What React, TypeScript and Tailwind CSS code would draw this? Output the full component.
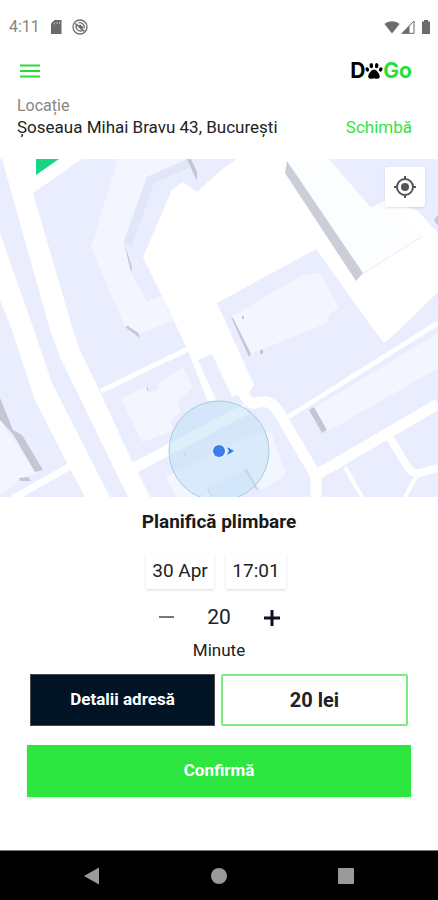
import React, { useState } from 'react';

const StatusBar = () => (
  <div className="flex h-[53px] items-center justify-between pl-[9px] pr-1 text-[#6b6b6b]">
    <div className="flex items-center">
      <span className="text-base text-[#858585]">4:11</span>
      <svg className="ml-2 h-4 w-4" viewBox="0 0 16 16" fill="currentColor">
        <path d="M6.500 1h7v14H3V4.500z" />
        <path d="M6.500 3.500v2M9 3v2M11.500 3v2" stroke="#b8b8b8" strokeWidth="1" />
      </svg>
      <svg className="ml-2 h-4 w-4" viewBox="0 0 16 16" fill="none" stroke="currentColor" strokeWidth="1.300">
        <circle cx="8" cy="8" r="7" />
        <path d="M4.500 5.500a4.500 4.500 0 0 0 6 6M6.500 4a4.300 4.300 0 0 1 5.500 5.500" />
        <path d="M3.500 4.500l9 8" strokeWidth="1.600" />
        <path d="M7 6.500l3.500 3" strokeWidth="3" />
      </svg>
    </div>
    <div className="flex items-center">
      <svg className="h-4 w-4" viewBox="0 0 16 16" fill="currentColor">
        <path d="M8 14.500L.500 5C4.500 1.200 11.500 1.200 15.500 5z" />
      </svg>
      <svg className="h-4 w-4" viewBox="0 0 16 16">
        <path d="M14 2v12.300H2z" fill="none" stroke="currentColor" strokeWidth="1" />
        <path d="M9.500 7v7.500H2z" fill="currentColor" />
      </svg>
      <svg className="ml-[2px] h-4 w-4" viewBox="0 0 16 16" fill="currentColor">
        <path d="M6 1h4v1.500h2V15H4V2.500h2z" />
      </svg>
    </div>
  </div>
);

const Logo = () => (
  <div className="flex items-center font-[Inter,sans-serif] text-[21px] font-bold leading-6">
    <span className="text-black">D</span>
    <svg className="h-5 w-[18px]" viewBox="0 0 18 20" fill="#000">
      <ellipse cx="2.300" cy="8.500" rx="1.700" ry="2.200" transform="rotate(-25 2.300 8.500)" />
      <ellipse cx="6.300" cy="4.700" rx="1.800" ry="2.600" transform="rotate(-8 6.300 4.700)" />
      <ellipse cx="11.700" cy="4.700" rx="1.800" ry="2.600" transform="rotate(8 11.700 4.700)" />
      <ellipse cx="15.700" cy="8.500" rx="1.700" ry="2.200" transform="rotate(25 15.700 8.500)" />
      <path d="M9 8.500c2.600 0 5.800 4.700 5.800 7.100 0 2.800-3.200 2.400-5.800 1.600-2.600.8-5.800 1.200-5.800-1.600C3.200 13.200 6.400 8.500 9 8.500z" />
    </svg>
    <span className="text-[#22e03a]">Go</span>
  </div>
);

const CityMap = () => (
  <svg className="block h-full w-full" viewBox="0 0 438 338" preserveAspectRatio="xMidYMid slice">
    <rect width="438" height="338" fill="#e9edfd" />

    {/* Buildings */}
    <g fill="#f3f6ff">
      <path d="M118 0H187L147 18L124 82L131 113L147 143L161 137L173 162L141 174L125 168L91 88z" />
      <path d="M231 158L301 117L320 114L339 149L329 155L327 164L251 195z" />
      <path d="M438 174V209L327 273L312 250z" />
      <path d="M121 239L145 228L149 233L158 231V224L183 208L193 229L177 243L181 253L171 261L172 272L142 283z" />
      <path d="M0 261L36 314L20 320L0 337z" />
      <path d="M166 318L245 278L271 272L286 316L262 331L246 309L208 329L213 338H176z" />
    </g>
    <path d="M147 18L187 0L190 8L154 24L131 88L124 82z" fill="#e1e6f8" />

    {/* Main roads */}
    <g fill="#fff">
      <path d="M0 74L34 171L52 224L110 338H85L68 306L35 241L12 171L0 141z" />
      <path d="M2 0H82L33 34L73 171L80 191L100 233L133 304L150 338H128L60 198L50 171z" />
      <path d="M236 0H329L371 49L386 41L417 51L438 74V133L399 171L384 184L374 171L316 90L217 144L254 226L250 232L232 238L212 195L198 201L216 241L208 243L187 189L143 98L172 31L183 23L197 33L219 13z" />
    </g>

    {/* Side streets */}
    <g fill="none" stroke="#fff">
      <path d="M101 232L188 190" strokeWidth="5" />
      <path d="M134 309L246 250" strokeWidth="11" />
      <path d="M240 228C246 240 249 246 256 244C270 240 275 246 281 257L316 317V338" strokeWidth="11" />
      <path d="M438 245L313 318" strokeWidth="11" />
      <path d="M438 164L288 258" strokeWidth="5" />
      <path d="M389 277L407 307Q412 316 420 314L438 309" strokeWidth="8" />
      <path d="M416 318L405 338M345 308L362 338" strokeWidth="4" />
      <path d="M12 340L74 305" strokeWidth="7" />
    </g>

    {/* Tall block and its wall */}
    <path d="M287 3L329 0L371 49L386 41L423 75L362 114z" fill="#fcfdff" />
    <path d="M423 77L362 115" stroke="#e8eaf2" />
    <path d="M287 2L285 14L356 122L363 114z" fill="#cbced6" />
    <g fill="#c4c7d3">
      <path d="M187 0L197 22V13L191 0z" />
      <path d="M124 84L131 113L132 108L125 87z" />
      <path d="M125 168L140 179L138 174L128 167z" />
      <path d="M231 158L249 198L251 195L233 159z" />
      <path d="M309 251L314 248L327 271L322 274z" />
      <path d="M0 239L13 271L22 276L43 311L35 313L13 275L0 261z" />
      <path d="M438 56L434 61L438 67zM19 319L28 318L31 322L20 322zM260 191h3v4h-3zM242 157h2v3h-2zM147 228h1v4h-1zM183 294L187 299L185 293z" />
      <path d="M208 329L213 338H212L207 330zM246 309L258 331L256 330L245 311z" />
    </g>
    <path d="M36 0H59L36 16z" fill="#16d585" />

    {/* Current position */}
    <circle cx="219" cy="292" r="50" fill="#bfe0f6" fillOpacity="0.5" stroke="#a9cbe2" />
    <circle cx="219" cy="292" r="7" fill="#fff" fillOpacity="0.5" />
    <circle cx="219" cy="292" r="6" fill="#3a7dec" />
    <path d="M227 288L234 292L227 296L229 292z" fill="#2f78ea" />
  </svg>
);

const App = () => {
  const [minutes, setMinutes] = useState(20);

  return (
    <div className="flex min-h-screen flex-col bg-white font-[Roboto,sans-serif] text-[#222]">
      <StatusBar />

      <header className="px-[17px]">
        <div className="flex h-9 items-center justify-between pl-[3px] pr-[9px]">
          <button aria-label="Meniu" className="text-[#2bdc38]">
            <svg className="h-5 w-5" viewBox="0 0 20 20" stroke="currentColor" strokeWidth="2">
              <path d="M0 4.500h20M0 10h20M0 15.500h20" />
            </svg>
          </button>
          <Logo />
        </div>
        <p className="mt-[7px] text-base leading-5 text-[#858585]">Locație</p>
        <div className="flex h-6 items-center justify-between pr-[9px] text-[17px]">
          <p>Șoseaua Mihai Bravu 43, București</p>
          <button className="text-[#35e142]">Schimbă</button>
        </div>
      </header>

      <section className="relative mt-[19px] h-[338px] overflow-hidden">
        <CityMap />
        <button
          aria-label="Locația mea"
          className="absolute right-[13px] top-2 flex h-10 w-10 items-center justify-center rounded-xs bg-white text-[#555] shadow"
        >
          <svg className="h-6 w-6" viewBox="0 0 24 24" fill="none" stroke="currentColor" strokeWidth="2">
            <circle cx="12" cy="12" r="8" />
            <circle cx="12" cy="12" r="4" fill="currentColor" stroke="none" />
            <path d="M12 1v3M12 20v3M1 12h3M20 12h3" />
          </svg>
        </button>
      </section>

      <main className="flex flex-col px-[27px]">
        <h1 className="mt-[13px] text-center text-[19px] font-bold leading-6 text-[#1a1a1a]">Planifică plimbare</h1>

        <div className="mt-[19px] flex justify-center gap-3 pr-[6px] text-[19px]">
          <button className="h-9 w-[68px] whitespace-nowrap bg-white shadow-sm">30 Apr</button>
          <button className="h-9 w-[60px] whitespace-nowrap bg-white shadow-sm">17:01</button>
        </div>

        <div className="mt-[14px] flex items-center justify-center gap-6">
          <button aria-label="Mai puțin" onClick={() => setMinutes(minutes - 5)} className="p-1">
            <svg className="h-5 w-5" viewBox="0 0 20 20" stroke="#777" strokeWidth="2">
              <path d="M2 10h15" />
            </svg>
          </button>
          <span className="w-7 text-center text-[21px] leading-7">{minutes}</span>
          <button aria-label="Mai mult" onClick={() => setMinutes(minutes + 5)} className="p-1">
            <svg className="h-5 w-5" viewBox="0 0 20 20" stroke="#0d0d1c" strokeWidth="3">
              <path d="M3 11h16M11 3v16" />
            </svg>
          </button>
        </div>
        <p className="mt-[7px] text-center text-[17px] leading-6">Minute</p>

        <div className="mt-3 flex gap-[6px] px-[3px]">
          <button className="h-13 flex-1 border border-[#444b52] bg-[#001426] text-[17px] font-bold text-white">
            Detalii adresă
          </button>
          <div className="flex h-13 flex-1 items-center justify-center rounded-xs border-2 border-[#7ceb80] text-xl font-bold">
            20 lei
          </div>
        </div>
        <button className="mt-[19px] h-13 bg-[#2de640] text-[17px] font-bold text-white shadow">Confirmă</button>
      </main>

      <nav className="mt-auto flex h-[50px] items-center justify-between border-t border-[#777] bg-black px-[82px]">
        <button aria-label="Înapoi">
          <svg className="h-5 w-5" viewBox="0 0 20 20" fill="#9a9a9a">
            <path d="M2 10L17 1.500v17z" />
          </svg>
        </button>
        <button aria-label="Acasă">
          <svg className="h-5 w-5" viewBox="0 0 20 20" fill="#9a9a9a">
            <circle cx="10" cy="10" r="8" />
          </svg>
        </button>
        <button aria-label="Recente">
          <svg className="h-5 w-5" viewBox="0 0 20 20" fill="#9a9a9a">
            <rect x="2" y="2" width="16" height="16" rx="1" />
          </svg>
        </button>
      </nav>
    </div>
  );
};

export default App;
